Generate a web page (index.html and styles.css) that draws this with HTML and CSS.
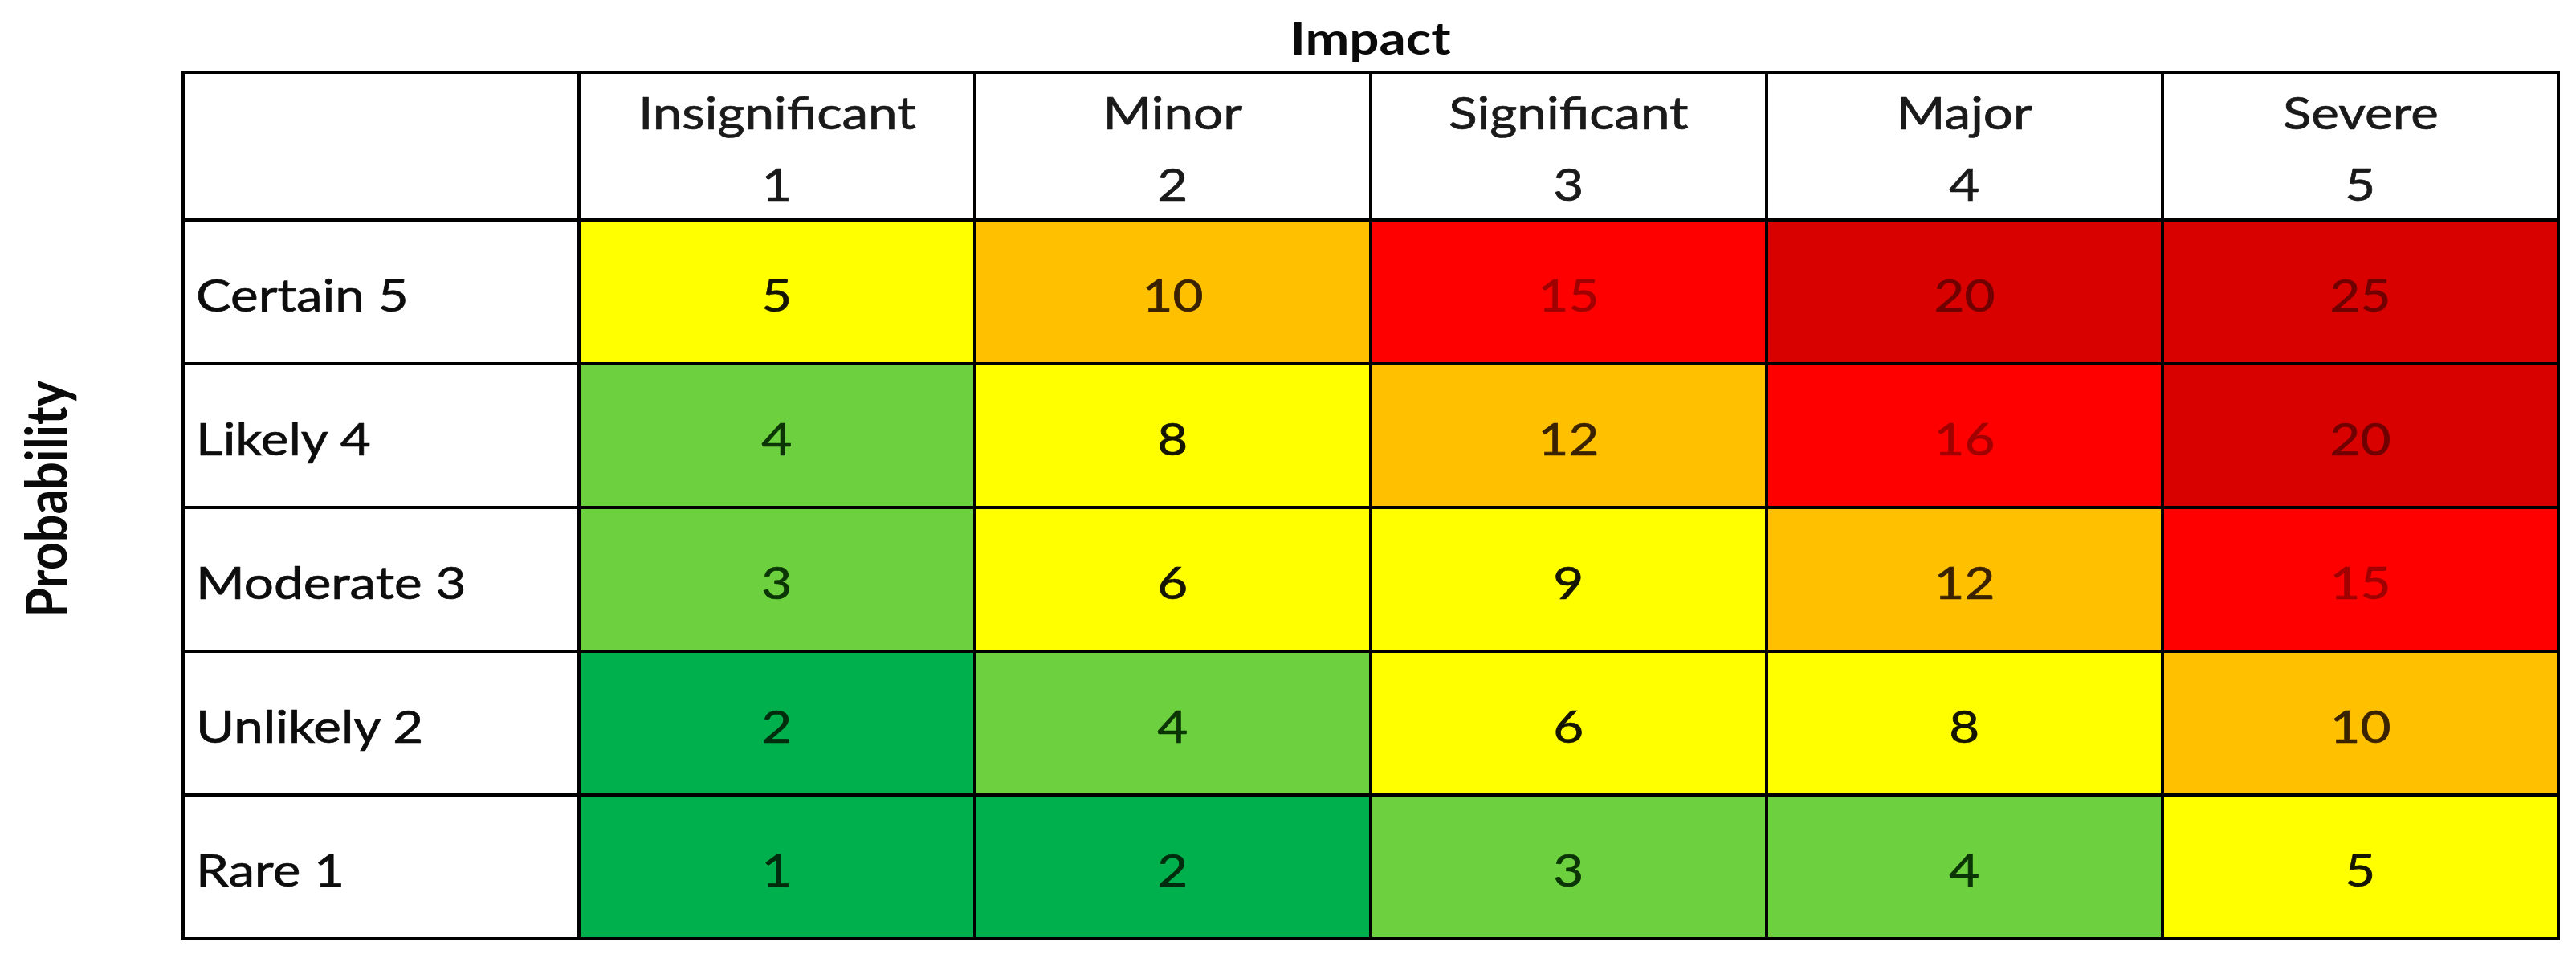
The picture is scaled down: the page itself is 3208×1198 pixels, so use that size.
FILE: index.html
```html
<!DOCTYPE html>
<html lang="en">
<head>
<meta charset="utf-8">
<title>Risk Matrix</title>
<link rel="stylesheet" href="styles.css">
</head>
<body>
<div class="page">
  <div class="side"><span class="ylabel">Probability</span></div>
  <div class="main">
    <div class="title"><span class="tx">Impact</span></div>
    <div class="matrix">
      <div class="cell head"></div>
      <div class="cell head"><span class="tx">Insignificant</span><span class="tx">1</span></div>
      <div class="cell head"><span class="tx">Minor</span><span class="tx">2</span></div>
      <div class="cell head"><span class="tx">Significant</span><span class="tx">3</span></div>
      <div class="cell head"><span class="tx">Major</span><span class="tx">4</span></div>
      <div class="cell head"><span class="tx">Severe</span><span class="tx">5</span></div>

      <div class="cell label"><span class="tx">Certain 5</span></div>
      <div class="cell num yel"><span class="tx">5</span></div>
      <div class="cell num org"><span class="tx">10</span></div>
      <div class="cell num red"><span class="tx">15</span></div>
      <div class="cell num dred"><span class="tx">20</span></div>
      <div class="cell num dred"><span class="tx">25</span></div>

      <div class="cell label"><span class="tx">Likely 4</span></div>
      <div class="cell num lgrn"><span class="tx">4</span></div>
      <div class="cell num yel"><span class="tx">8</span></div>
      <div class="cell num org"><span class="tx">12</span></div>
      <div class="cell num red"><span class="tx">16</span></div>
      <div class="cell num dred"><span class="tx">20</span></div>

      <div class="cell label"><span class="tx">Moderate 3</span></div>
      <div class="cell num lgrn"><span class="tx">3</span></div>
      <div class="cell num yel"><span class="tx">6</span></div>
      <div class="cell num yel"><span class="tx">9</span></div>
      <div class="cell num org"><span class="tx">12</span></div>
      <div class="cell num red"><span class="tx">15</span></div>

      <div class="cell label"><span class="tx">Unlikely 2</span></div>
      <div class="cell num dgrn"><span class="tx">2</span></div>
      <div class="cell num lgrn"><span class="tx">4</span></div>
      <div class="cell num yel"><span class="tx">6</span></div>
      <div class="cell num yel"><span class="tx">8</span></div>
      <div class="cell num org"><span class="tx">10</span></div>

      <div class="cell label"><span class="tx">Rare 1</span></div>
      <div class="cell num dgrn"><span class="tx">1</span></div>
      <div class="cell num dgrn"><span class="tx">2</span></div>
      <div class="cell num lgrn"><span class="tx">3</span></div>
      <div class="cell num lgrn"><span class="tx">4</span></div>
      <div class="cell num yel"><span class="tx">5</span></div>
    </div>
  </div>
</div>
</body>
</html>
```
FILE: styles.css
```css
:root {
  --sx: 1.17;
}
html, body {
  margin: 0;
  padding: 0;
  background: #ffffff;
}
body {
  font-family: "Lato", "Open Sans", sans-serif;
  color: #111111;
}
.page {
  display: flex;
  align-items: stretch;
  width: 3208px;
  height: 1198px;
}
.side {
  width: 226px;
  flex: none;
  display: flex;
  align-items: center;
  padding-top: 88px;
  padding-bottom: 42px;
  box-sizing: border-box;
  height: 1198px;
}
.ylabel {
  display: inline-block;
  margin-left: 19px;
  font-weight: 700;
  font-size: 61px;
  line-height: 1.2;
  writing-mode: vertical-rl;
  transform: scaleX(var(--sx)) rotate(180deg);
  color: #0a0a0a;
}
.main {
  flex: none;
  display: flex;
  flex-direction: column;
}
.title {
  height: 88px;
  box-sizing: border-box;
  padding-top: 13px;
  text-align: center;
  font-weight: 700;
  font-size: 56px;
  line-height: 67px;
  color: #0a0a0a;
}
.tx {
  display: inline-block;
  transform: scaleX(var(--sx));
}
.matrix {
  display: grid;
  grid-template-columns: repeat(6, 489px);
  grid-template-rows: 180px repeat(5, 175px);
  gap: 4px;
  padding: 4px;
  background: #000000;
  width: max-content;
}
.cell {
  background: #ffffff;
  font-size: 56px;
  line-height: 67px;
  overflow: visible;
  -webkit-text-stroke: 0.7px currentColor;
}
.head {
  display: flex;
  flex-direction: column;
  align-items: center;
  padding-top: 3px;
  line-height: 89px;
  color: #1a1a1a;
}
.label {
  display: flex;
  align-items: center;
  padding-top: 6px;
  padding-left: 14px;
  color: #0d0d0d;
}
.label .tx {
  transform-origin: left center;
}
.num {
  display: flex;
  align-items: center;
  justify-content: center;
  padding-top: 6px;
}
.yel { background: #ffff00; color: #141400; }
.org { background: #ffc000; color: #3a2200; }
.red { background: #ff0000; color: #a00000; }
.dred { background: #d90000; color: #700000; }
.lgrn { background: #6dd13f; color: #0c3506; }
.dgrn { background: #00b04c; color: #002c0e; }
```
